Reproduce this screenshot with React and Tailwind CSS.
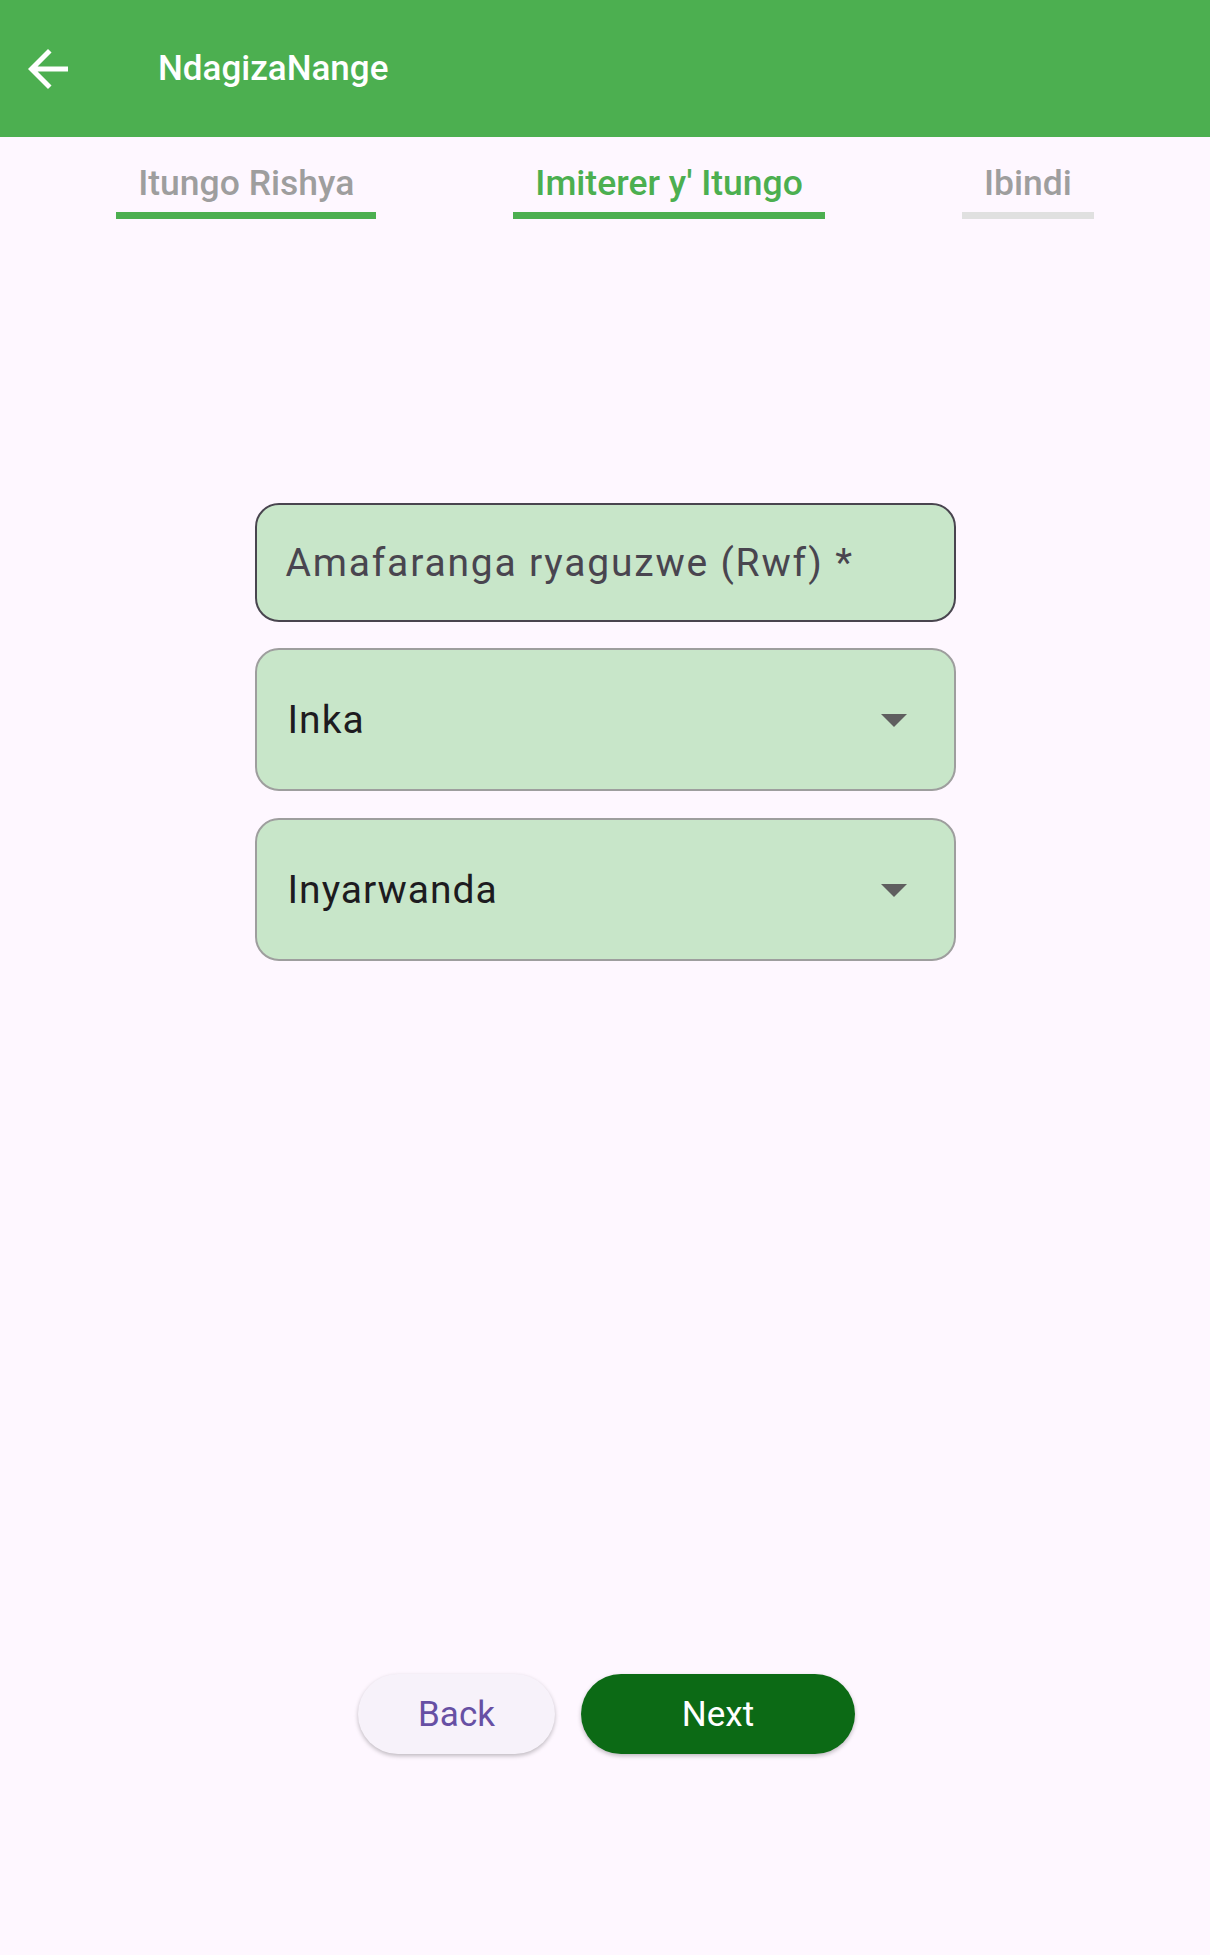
const tabs = [
  { label: 'Itungo Rishya', done: true },
  { label: "Imiterer y' Itungo", active: true },
  { label: 'Ibindi' },
];

const BackArrow = () => (
  <svg viewBox="0 0 24 24" className="h-[60px] w-[60px]" fill="#ffffff">
    <path d="M20 11H7.83l5.59-5.59L12 4l-8 8 8 8 1.41-1.41L7.83 13H20v-2z" />
  </svg>
);

const Caret = () => (
  <svg viewBox="0 0 10 5" className="mt-[2px] h-[13px] w-[26px]" fill="#5f5f5f">
    <path d="M0 0l5 5 5-5z" />
  </svg>
);

const SelectField = ({ value, className = '' }) => (
  <div className={`flex h-[143px] items-center justify-between rounded-[24px] border-2 border-[#9E9E9E] bg-[#C8E6C9] pl-[31px] pr-[47px] ${className}`}>
    <span className="text-[39px] leading-[46px] tracking-[1px] text-[#1D1B20]">{value}</span>
    <Caret />
  </div>
);

export default function App() {
  return (
    <div className="min-h-[1955px] bg-[#FEF7FF] font-['Roboto',sans-serif]">
      <header className="flex h-[137px] items-center bg-[#4CAF50]">
        <button type="button" aria-label="Back" className="ml-[18px] flex">
          <BackArrow />
        </button>
        <h1 className="ml-[80px] text-[35px] font-medium leading-[42px] text-white">NdagizaNange</h1>
      </header>

      <nav className="mt-[25px] flex justify-center gap-[137px]">
        {tabs.map((tab) => (
          <div key={tab.label} className="flex flex-col">
            <span
              className={`px-[22px] text-[35.5px] font-medium leading-[42px] ${
                tab.active ? 'text-[#4CAF50]' : 'text-[#9E9E9E]'
              }`}
            >
              {tab.label}
            </span>
            <div className={`mt-[8px] h-[7px] ${tab.done || tab.active ? 'bg-[#4CAF50]' : 'bg-[#E0E0E0]'}`} />
          </div>
        ))}
      </nav>

      <form className="mx-auto mt-[284px] flex w-[701px] flex-col">
        <div className="flex h-[119px] items-center rounded-[24px] border-2 border-[#49454F] bg-[#C8E6C9] pl-[29px]">
          <span className="text-[39px] leading-[46px] tracking-[1.8px] text-[#49454F]">Amafaranga ryaguzwe (Rwf) *</span>
        </div>
        <SelectField value="Inka" className="mt-[26px]" />
        <SelectField value="Inyarwanda" className="mt-[27px]" />
      </form>

      <div className="mt-[713px] flex justify-center gap-[26px] pl-[3px]">
        <button
          type="button"
          className="h-[80px] w-[197px] rounded-full bg-[#F7F2FA] pt-[3px] text-[35px] text-[#6750A4] shadow-[0_2px_4px_rgba(0,0,0,0.25)]"
        >
          Back
        </button>
        <button
          type="button"
          className="h-[80px] w-[274px] rounded-full bg-[#0C6A15] pt-[3px] text-[35px] text-white shadow-[0_2px_4px_rgba(0,0,0,0.25)]"
        >
          Next
        </button>
      </div>
    </div>
  );
}
